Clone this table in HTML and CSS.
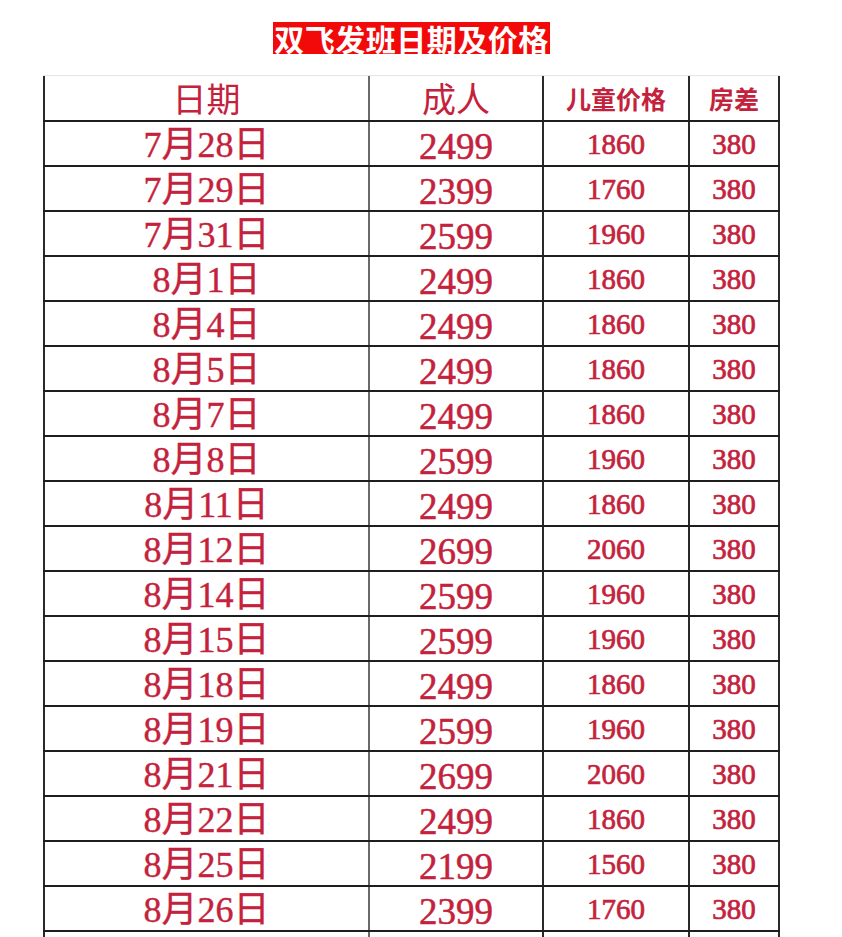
FILE: index.html
```html
<!DOCTYPE html>
<html lang="zh">
<head>
<meta charset="utf-8">
<title>双飞发班日期及价格</title>
<link rel="stylesheet" href="styles.css">
</head>
<body>
<div class="page">
  <div class="title-wrap"><span class="title">双飞发班日期及价格</span></div>
  <div class="table">
    <div class="row head">
      <div class="cell c1 h-serif">日期</div>
      <div class="cell c2 h-serif">成人</div>
      <div class="cell c3 h-sans">儿童价格</div>
      <div class="cell c4 h-sans">房差</div>
    </div>
    <div class="row"><div class="cell c1 date">7月28日</div><div class="cell c2 big">2499</div><div class="cell c3 small">1860</div><div class="cell c4 small">380</div></div>
    <div class="row"><div class="cell c1 date">7月29日</div><div class="cell c2 big">2399</div><div class="cell c3 small">1760</div><div class="cell c4 small">380</div></div>
    <div class="row"><div class="cell c1 date">7月31日</div><div class="cell c2 big">2599</div><div class="cell c3 small">1960</div><div class="cell c4 small">380</div></div>
    <div class="row"><div class="cell c1 date">8月1日</div><div class="cell c2 big">2499</div><div class="cell c3 small">1860</div><div class="cell c4 small">380</div></div>
    <div class="row"><div class="cell c1 date">8月4日</div><div class="cell c2 big">2499</div><div class="cell c3 small">1860</div><div class="cell c4 small">380</div></div>
    <div class="row"><div class="cell c1 date">8月5日</div><div class="cell c2 big">2499</div><div class="cell c3 small">1860</div><div class="cell c4 small">380</div></div>
    <div class="row"><div class="cell c1 date">8月7日</div><div class="cell c2 big">2499</div><div class="cell c3 small">1860</div><div class="cell c4 small">380</div></div>
    <div class="row"><div class="cell c1 date">8月8日</div><div class="cell c2 big">2599</div><div class="cell c3 small">1960</div><div class="cell c4 small">380</div></div>
    <div class="row"><div class="cell c1 date">8月11日</div><div class="cell c2 big">2499</div><div class="cell c3 small">1860</div><div class="cell c4 small">380</div></div>
    <div class="row"><div class="cell c1 date">8月12日</div><div class="cell c2 big">2699</div><div class="cell c3 small">2060</div><div class="cell c4 small">380</div></div>
    <div class="row"><div class="cell c1 date">8月14日</div><div class="cell c2 big">2599</div><div class="cell c3 small">1960</div><div class="cell c4 small">380</div></div>
    <div class="row"><div class="cell c1 date">8月15日</div><div class="cell c2 big">2599</div><div class="cell c3 small">1960</div><div class="cell c4 small">380</div></div>
    <div class="row"><div class="cell c1 date">8月18日</div><div class="cell c2 big">2499</div><div class="cell c3 small">1860</div><div class="cell c4 small">380</div></div>
    <div class="row"><div class="cell c1 date">8月19日</div><div class="cell c2 big">2599</div><div class="cell c3 small">1960</div><div class="cell c4 small">380</div></div>
    <div class="row"><div class="cell c1 date">8月21日</div><div class="cell c2 big">2699</div><div class="cell c3 small">2060</div><div class="cell c4 small">380</div></div>
    <div class="row"><div class="cell c1 date">8月22日</div><div class="cell c2 big">2499</div><div class="cell c3 small">1860</div><div class="cell c4 small">380</div></div>
    <div class="row"><div class="cell c1 date">8月25日</div><div class="cell c2 big">2199</div><div class="cell c3 small">1560</div><div class="cell c4 small">380</div></div>
    <div class="row"><div class="cell c1 date">8月26日</div><div class="cell c2 big">2399</div><div class="cell c3 small">1760</div><div class="cell c4 small">380</div></div>
    <div class="row"><div class="cell c1"></div><div class="cell c2"></div><div class="cell c3"></div><div class="cell c4"></div></div>
  </div>
</div>
</body>
</html>
```

FILE: styles.css
```css
html, body {
  margin: 0;
  padding: 0;
  background: #ffffff;
}

.page {
  width: 823px;
}

.title-wrap {
  padding-top: 22px;
  text-align: center;
  height: 32px;
  line-height: 32px;
}

.title {
  display: inline-block;
  background: #f20a0a;
  color: #ffffff;
  font-family: "Noto Sans CJK SC", sans-serif;
  font-weight: 700;
  font-size: 30px;
  line-height: 32px;
  height: 32px;
  padding: 0 1px;
  letter-spacing: 0.5px;
}

.table {
  margin-top: 21px;
  margin-left: 43px;
  width: 737px;
  border-top: 1px solid #e6e6e6;
  color: #c4223c;
}

.row {
  display: grid;
  grid-template-columns: 325px 174px 146px 92px;
  height: 45px;
  box-sizing: border-box;
  border-bottom: 2px solid #1e1e1e;
}

.row.head {
  height: 46px;
}

.row:last-child {
  border-bottom: none;
}

.cell {
  display: flex;
  align-items: center;
  justify-content: center;
  box-sizing: border-box;
  border-left: 2px solid #2a2a2a;
  white-space: nowrap;
  line-height: 1;
  overflow: hidden;
}

.c2 {
  border-left-color: #6a6a6a;
}

.c4 {
  border-right: 2px solid #2a2a2a;
}

.h-serif {
  font-family: "Liberation Serif", "Noto Sans CJK SC", serif;
  font-size: 34px;
  padding-top: 5px;
}

.h-sans {
  font-family: "Noto Sans CJK SC", sans-serif;
  font-weight: 700;
  font-size: 25px;
  padding-top: 1px;
}

.date {
  font-family: "Liberation Serif", "Noto Sans CJK SC", serif;
  font-size: 36px;
  padding-top: 3px;
  -webkit-text-stroke: 0.4px #c4223c;
}

.big {
  font-family: "Liberation Serif", serif;
  font-size: 37px;
  padding-top: 5px;
  -webkit-text-stroke: 0.5px #c4223c;
}

.small {
  font-family: "Liberation Serif", serif;
  font-size: 29px;
  padding-top: 2px;
  -webkit-text-stroke: 0.7px #c4223c;
}
```
